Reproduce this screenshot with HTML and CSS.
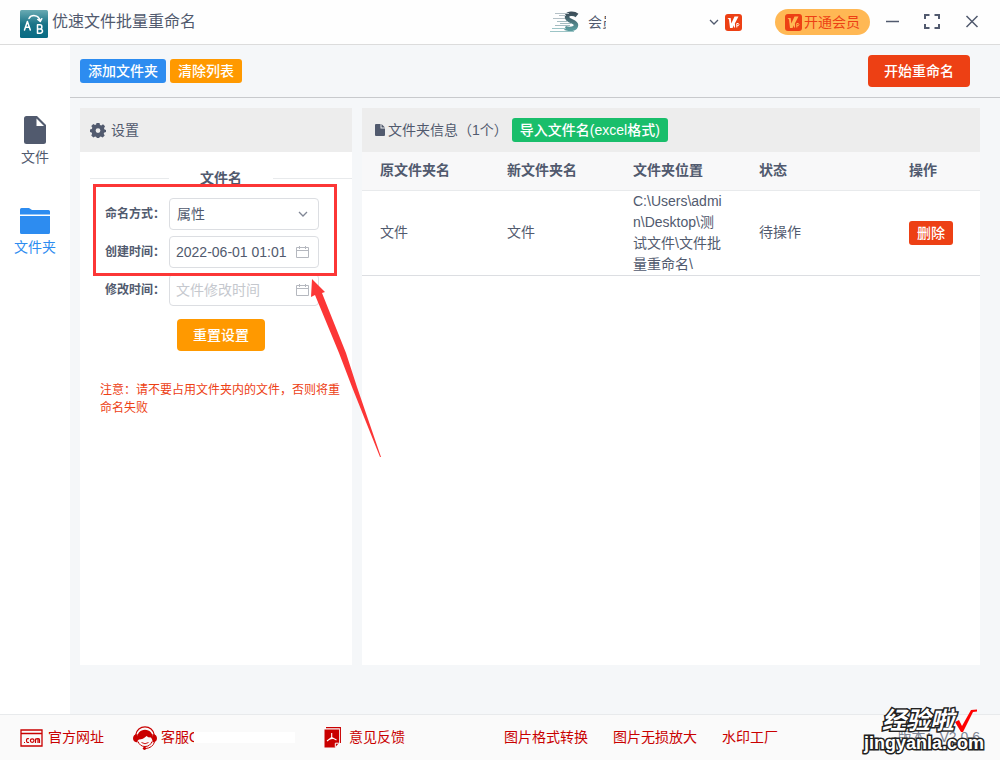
FILE: index.html
```html
<!DOCTYPE html>
<html lang="zh-CN">
<head>
<meta charset="utf-8">
<title>优速文件批量重命名</title>
<link rel="stylesheet" href="styles.css">
</head>
<body>
<header class="titlebar">
  <svg class="app-logo" viewBox="0 0 28 28" aria-hidden="true">
    <defs><linearGradient id="logoFill" x1="0" y1="0" x2="0" y2="1"><stop offset="0" stop-color="#6aabb3"/><stop offset=".5" stop-color="#1a7488"/><stop offset="1" stop-color="#086b84"/></linearGradient></defs>
    <rect width="28" height="28" rx="1.5" fill="url(#logoFill)"/>
    <g fill="none" stroke="#fff" stroke-width="1.5" stroke-linecap="round" stroke-linejoin="round">
      <path d="M4.5 20 7.4 11.500 10.300 20M5.500 17.200h3.800"/>
      <path d="M17.500 14.800v8.400h2.600c3.200 0 3.200-4.200.2-4.200h-2.800M20 19c2.500 0 2.500-4.200 0-4.200h-2.500"/>
      <path d="M9 8.500c2-3.800 9.500-4.500 11 2M17.800 9.500l2.500 2 1.500-2.800"/>
    </g>
  </svg>
  <h1 class="app-title">优速文件批量重命名</h1>
  <div class="account">
    <svg class="avatar" viewBox="0 0 30 24" aria-hidden="true">
      <defs><linearGradient id="sFill" x1="0" y1="0" x2="0" y2="1"><stop offset="0" stop-color="#3d4f5a"/><stop offset="1" stop-color="#5a9a9c"/></linearGradient></defs>
      <path d="M27 5.500c-3-2.500-10-2.500-10 1.500 0 4.500 9 4 9 8 0 4.500-7 4.500-11 3" fill="none" stroke="url(#sFill)" stroke-width="4.500"/>
      <g fill="none" stroke-width="1"><path d="M5 3.500h14M9 5.500h7M3 8.500h12" stroke="#b4c0c6"/><path d="M7 11.500h11M10 13.500h12M5 15.500h15" stroke="#a5bcc0"/><path d="M2 18.500h14M0 21.500h24" stroke="#9cc4c6"/></g>
    </svg>
    <span class="member">会员</span>
    <svg class="chevron" viewBox="0 0 10 8" aria-hidden="true"><path d="M1 2l4 4 4-4" fill="none" stroke="#515a6e" stroke-width="1.300"/></svg>
    <svg class="vip" viewBox="0 0 17 17" aria-hidden="true"><rect width="17" height="17" rx="3" fill="#ed4014"/><path d="M2.500 4h3.200L6.300 9.500 9.500 2.500h4L7.500 14H5L4 5.500z" fill="#fff"/><path d="M9.500 9.500v4M11.800 13.500v-4h1.500q1.300 1.200 0 2.200h-1.500" fill="none" stroke="#fff"/></svg>
  </div>
  <button class="pill" type="button">
    <svg class="vip" viewBox="0 0 17 17" aria-hidden="true"><rect width="17" height="17" rx="3" fill="#ed4014"/><path d="M2.500 4h3.200L6.300 9.500 9.500 2.500h4L7.500 14H5L4 5.500z" fill="#ffb854"/><path d="M9.500 9.500v4M11.800 13.500v-4h1.500q1.300 1.200 0 2.200h-1.500" fill="none" stroke="#ffb854"/></svg>开通会员</button>
  <div class="window-controls">
    <button type="button" class="icon-button" aria-label="最小化"><svg viewBox="0 0 16 16"><path d="M2 7.500h13" stroke-width="1.500"/></svg></button>
    <button type="button" class="icon-button" aria-label="全屏"><svg viewBox="0 0 16 16"><path d="M1 5V1h4.500M10.500 1H15v4M15 10v4h-4.500M5.500 14H1v-4" stroke-width="2"/></svg></button>
    <button type="button" class="icon-button" aria-label="关闭"><svg viewBox="0 0 16 16"><path d="M2.500 2l11 11M13.500 2l-11 11" stroke-width="1.500"/></svg></button>
  </div>
</header>

<div class="workspace">
  <nav class="sidebar">
    <a class="side-item" href="#file">
      <svg class="side-file" viewBox="0 0 22 28" aria-hidden="true"><path d="M2.500 0H13l9 9V25.500q0 2.500-2.500 2.500h-17Q0 28 0 25.500v-23Q0 0 2.500 0z" fill="#515a6e"/><path d="M12.500 2.500 20 10h-7.500z" fill="#fff"/></svg>文件</a>
    <a class="side-item active" href="#folder">
      <svg class="side-folder" viewBox="0 0 30 26" aria-hidden="true"><path d="M0 6.500V1.500Q0 0 1.500 0H9l3 2h16.500Q30 2 30 3.500v3zM0 8h30v16.500q0 1.500-1.500 1.500h-27Q0 26 0 24.500z" fill="#2d8cf0"/></svg>文件夹</a>
  </nav>
  <main class="main">
    <div class="toolbar">
      <button class="btn small blue" type="button">添加文件夹</button>
      <button class="btn small orange" type="button">清除列表</button>
      <button class="btn red start" type="button">开始重命名</button>
    </div>
    <div class="panels">
      <section class="panel settings">
        <h2 class="panel-head settings-head">
          <svg class="gear" viewBox="0 0 16 16" aria-hidden="true"><path fill="#515a6e" fill-rule="evenodd" d="M6.500 1h3l.5 2 1.300.6L13 2.300l2 2-1 2 .5 1.200 1.500.5v2l-1.700.5-.6 1.300 1 1.800-2 2-1.900-1-1.200.5-.6 1.400H7l-.6-1.500-1.300-.5-1.800 1-2-2 .8-1.700-.5-1.300L0 10V7.500L1.800 7l.5-1.200-1-1.800 2-2L5 3.100 6.100 2.500zM8 6.200a2.400 2.400 0 1 0 0 4.800 2.400 2.400 0 0 0 0-4.800z"/></svg>设置</h2>
        <form class="form">
          <h3 class="divider">文件名</h3>
          <div class="field"><label for="mode">命名方式：</label><div class="control"><select id="mode"><option>属性</option></select><svg class="control-icon" viewBox="0 0 14 14" aria-hidden="true"><path d="M3 5l4 4 4-4" stroke="#808695" stroke-width="1.300"/></svg></div></div>
          <div class="field"><label for="created">创建时间：</label><div class="control"><input id="created" type="text" value="2022-06-01 01:01"><svg class="control-icon" viewBox="0 0 14 14" aria-hidden="true"><path d="M.5 2.500h12v10H.5zM.5 5.500h12M3.500 1v3M9.500 1v3" stroke="#b5b8bf"/></svg></div></div>
          <div class="field"><label for="modified">修改时间：</label><div class="control"><input id="modified" type="text" placeholder="文件修改时间"><svg class="control-icon" viewBox="0 0 14 14" aria-hidden="true"><path d="M.5 2.500h12v10H.5zM.5 5.500h12M3.500 1v3M9.500 1v3" stroke="#b5b8bf"/></svg></div></div>
          <button class="btn orange reset" type="reset">重置设置</button>
          <p class="notice">注意：请不要占用文件夹内的文件，否则将重命名失败</p>
        </form>
      </section>
      <section class="panel info">
        <div class="panel-head info-head">
          <svg class="doc" viewBox="0 0 10 12" aria-hidden="true"><path d="M1 0h4.500v4.500H10V11q0 1-1 1H1q-1 0-1-1V1q0-1 1-1zM6.500 0 10 3.500H6.500z" fill="#515a6e"/></svg>
          <h2 class="info-title">文件夹信息（1个）</h2>
          <button class="btn small green" type="button">导入文件名(excel格式)</button>
        </div>
        <table class="files">
          <colgroup><col class="col-name"><col class="col-new"><col class="col-path"><col class="col-state"><col></colgroup>
          <thead><tr><th>原文件夹名</th><th>新文件夹名</th><th>文件夹位置</th><th>状态</th><th>操作</th></tr></thead>
          <tbody><tr><td>文件</td><td>文件</td><td>C:\Users\admin\Desktop\测试文件\文件批量重命名\</td><td>待操作</td><td><button class="btn tiny red" type="button">删除</button></td></tr></tbody>
        </table>
      </section>
    </div>
  </main>
</div>

<footer class="footer">
  <a class="foot-link site" href="#site"><svg class="com" viewBox="0 0 23 18" aria-hidden="true"><path d="M1 1h21v16H1zM1 4.500h21" fill="none" stroke="#c90000" stroke-width="1.300"/><g fill="none" stroke="#c90000" stroke-width="1.200"><path d="M4 13.500h1M9 9.800q-2.500-.8-2.500 1.700T9 13.400M18 14v-4q1.300-1 1.500 1v3M15.500 14V9.500M15.500 10.500q2.500-2 2.500.5"/><circle cx="12.200" cy="11.600" r="1.800"/></g></svg>官方网址</a>
  <a class="foot-link service" href="#service"><svg class="headset" viewBox="0 0 24 24" aria-hidden="true"><path d="M2.500 9.500C4-2 20-2 21.500 9.500" fill="none" stroke="#c90000" stroke-width="1.200"/><path d="M4 15C2 0 22 0 20 15l-2-3.500q-3 0-4.500-1.500Q10 13.500 6 13.500z" fill="#c90000"/><path d="M4.500 8v8.500Q0 16 0 12.300T4.500 8zM19.500 8v8.500q4.500-.5 4.500-4.200T19.500 8z" fill="#c90000"/><path d="M5 15.500q2 5 7 5t7-5M21.500 16q-2 6-9 6.500" fill="none" stroke="#c90000"/><path d="M8.500 16.500q3.500 2.500 7 0" fill="none" stroke="#c90000" stroke-width=".9"/><circle cx="11.500" cy="22.300" r="1.600" fill="#c90000"/></svg><span class="service-text">客服QQ</span><span class="blank"></span></a>
  <a class="foot-link feedback" href="#feedback"><svg class="pdf" viewBox="0 0 17 21" aria-hidden="true"><path d="M2 .6h14.400V16" fill="none" stroke="#c90000" stroke-width="1.100"/><path d="M.5 2.500H15V16l-4 4.500H.5z" fill="#c90000"/><path d="M11.300 20v-3.800h3.500" fill="none" stroke="#fff"/><path d="M7.700 6v4.500L3 14M7.700 10.500l4.800 2.500M5 12.500q2.700-1.300 5.500-.8" fill="none" stroke="#fff" stroke-width="1.100"/></svg>意见反馈</a>
  <a class="foot-link" href="#convert">图片格式转换</a>
  <a class="foot-link" href="#enlarge">图片无损放大</a>
  <a class="foot-link" href="#watermark">水印工厂</a>
  <span class="version">版本：V2.0.6</span>
</footer>

<div class="watermark"><span class="mark-name">经验啦</span><svg class="tick" viewBox="0 0 24 24" aria-hidden="true"><path d="M1 13l4-2 3 6L17 1l6-.5v2l-4 .5L9 23H7z" fill="#f00"/></svg><span class="mark-site">jingyanla.com</span></div>
<div class="callout"></div>
<svg class="arrow" viewBox="0 0 72 180" aria-hidden="true"><path d="M1 0 14 13 11 14 35 74 46 108 70 178H69L41 108 28 74 4 16 0 18z" fill="#fc3636"/></svg>
</body>
</html>
```
FILE: styles.css
```css
* { box-sizing: border-box; }
body {
  margin: 0;
  min-height: 100vh;
  display: flex;
  flex-direction: column;
  position: relative;
  font: 14px/21px "Liberation Sans", "Noto Sans CJK SC", sans-serif;
  color: #515a6e;
  background: #f5f7f9;
}
h1, h2, h3, p { margin: 0; font-weight: 400; }
a { color: inherit; text-decoration: none; }
svg { display: block; flex: none; }
button, input, select { font: inherit; color: inherit; }
button { border: 0; cursor: pointer; white-space: nowrap; }

.titlebar {
  display: flex;
  align-items: center;
  height: 45px;
  padding: 0 20px;
  background: #fefefe;
  border-bottom: 1px solid #dcdcdc;
}
.app-logo { width: 28px; height: 28px; margin: 4px 4px 0 0; }
.app-title { font-size: 16px; line-height: 24px; }
.account { display: flex; align-items: center; margin-left: auto; }
.avatar { width: 30px; height: 24px; margin-right: 8px; }
.member { width: 18px; overflow: hidden; white-space: nowrap; margin-right: 103px; }
.chevron { width: 10px; height: 8px; margin-right: 6px; }
.vip { width: 17px; height: 17px; }
.pill {
  display: flex;
  align-items: center;
  gap: 2px;
  height: 26px;
  margin-left: 33px;
  padding: 0 10px;
  border-radius: 13px;
  background: #ffb854;
  color: #ed4014;
}
.window-controls { display: flex; gap: 24px; margin-left: 14px; }
.icon-button { width: 16px; height: 16px; padding: 0; background: none; }
.icon-button svg { width: 16px; height: 16px; fill: none; stroke: #515a6e; }

.workspace { display: flex; flex: 1; }
.sidebar {
  width: 70px;
  flex: none;
  display: flex;
  flex-direction: column;
  gap: 40px;
  padding-top: 71px;
  background: #fff;
}
.side-item { display: flex; flex-direction: column; align-items: center; gap: 3px; }
.active { color: #2d8cf0; }
.side-file { width: 22px; height: 28px; }
.side-folder { width: 30px; height: 26px; }

.main { flex: 1; min-width: 0; display: flex; flex-direction: column; }
.toolbar {
  display: flex;
  align-items: center;
  gap: 4px;
  height: 53px;
  padding: 0 30px 0 10px;
  border-bottom: 1px solid #c8cacd;
}
.btn { height: 32px; padding: 0 16px; border-radius: 4px; color: #fff; line-height: 20px; font-weight: 500; }
.small, .tiny { height: 24px; padding: 0 8px; border-radius: 3px; }
.blue { background: #2d8cf0; }
.orange { background: #f90; }
.red { background: #ed4014; }
.green { background: #19be6b; }
.start { margin-left: auto; }

.panels { flex: 1; display: flex; gap: 10px; padding: 10px 20px 49px 10px; }
.panel { background: #fff; }
.settings { width: 272px; flex: none; }
.info { flex: 1; min-width: 0; }
.panel-head { display: flex; align-items: center; height: 44px; background: #ededed; font-size: 14px; }
.settings-head { gap: 5px; padding-left: 10px; }
.gear { width: 16px; height: 16px; }
.info-head { padding-left: 13px; }
.doc { width: 10px; height: 12px; margin-right: 3px; }
.info-title { font-size: 14px; margin-right: 4px; }

.form { display: flex; flex-direction: column; gap: 6px; padding: 16px 0 0 10px; }
.divider { display: flex; align-items: center; gap: 31px; font-size: 14px; font-weight: 700; margin-bottom: 3px; }
.divider::before, .divider::after { content: ""; flex: 1; border-top: 1px solid #e8eaec; }
.field { display: flex; align-items: center; padding-left: 15px; }
.field label { width: 64px; font-size: 12px; font-weight: 700; white-space: nowrap; }
.control { position: relative; width: 150px; }
.control input, .control select {
  display: block;
  width: 100%;
  height: 32px;
  padding: 0 30px 0 7px;
  appearance: none;
  background: #fff;
  border: 1px solid #dcdee2;
  border-radius: 4px;
}
.control input { padding-right: 20px; padding-left: 6px; }
.control input::placeholder { color: #c5c8ce; }
.control-icon { position: absolute; right: 9px; top: 9px; width: 14px; height: 14px; fill: none; pointer-events: none; }
.reset { align-self: center; margin-top: 7px; }
.notice { padding: 24px 10px 0; color: #ed4014; font-size: 12px; line-height: 18px; }

.files { width: 100%; table-layout: fixed; border-collapse: collapse; }
.col-name { width: 127px; }
.col-new, .col-path { width: 126px; }
.col-state { width: 150px; }
.files th, .files td { padding: 0 18px; text-align: left; border-bottom: 1px solid #dcdee2; word-break: break-all; }
.files th { height: 38px; background: #f8f8f9; border-color: #e8eaec; }

.footer {
  display: flex;
  align-items: center;
  gap: 25px;
  height: 46px;
  padding: 0 20px;
  background: #fafafa;
  border-top: 1px solid #e8eaec;
  color: #c90000;
  white-space: nowrap;
}
.foot-link { display: flex; align-items: center; }
.com { width: 23px; height: 18px; margin-right: 5px; }
.site { margin-right: 4px; }
.headset { width: 24px; height: 24px; margin-right: 4px; }
.service-text { width: 33px; overflow: hidden; }
.blank { width: 101px; height: 11px; background: #fff; }
.service { margin-right: 4px; }
.pdf { width: 17px; height: 21px; margin-right: 8px; }
.feedback { margin-right: 74px; }
.version { margin-left: auto; color: #808695; }

.watermark {
  position: absolute;
  right: 16px;
  bottom: 7px;
  display: grid;
  grid-template-columns: auto 24px;
  column-gap: 4px;
  padding-right: 0;
  color: #fff;
  font-weight: 700;
  -webkit-text-stroke: 3px #222;
  paint-order: stroke fill;
  pointer-events: none;
}
.mark-name { padding-right: 2px; font-size: 24px; line-height: 24px; font-style: italic; text-align: right; }
.tick { width: 24px; height: 24px; margin-left: -6px; }
.mark-site { grid-column: 1 / 3; font-size: 18px; line-height: 20px; }
.callout {
  position: absolute;
  left: 93px;
  top: 184px;
  width: 244px;
  height: 92px;
  border: 3px solid #fc3636;
  pointer-events: none;
}
.arrow { position: absolute; left: 311px; top: 279px; width: 72px; height: 180px; pointer-events: none; }
```
